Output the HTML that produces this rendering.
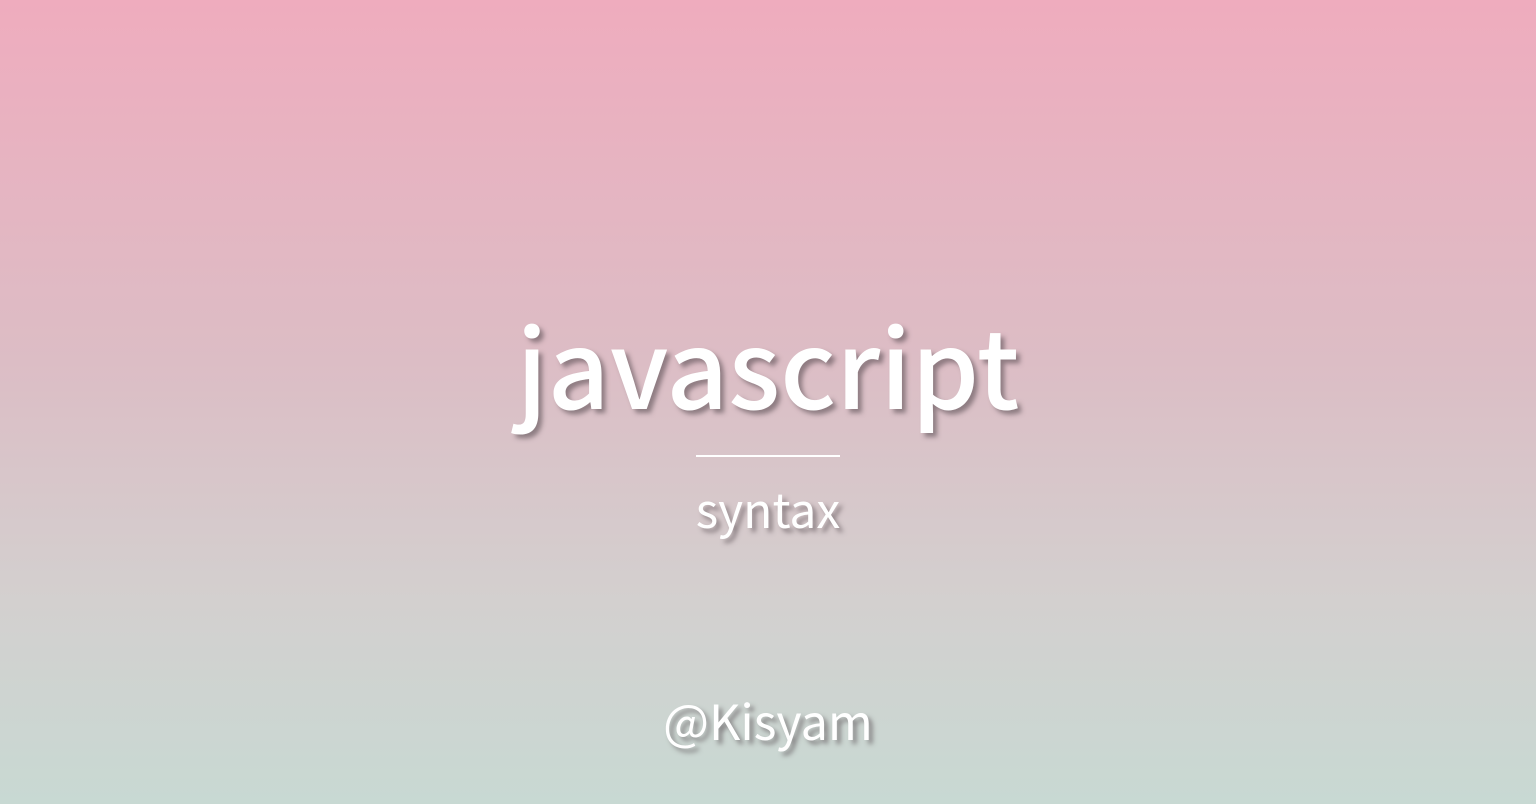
<!DOCTYPE html>
<html><head><style>
html,body{margin:0;padding:0}
body{width:1536px;height:804px;overflow:hidden;position:relative;background:linear-gradient(to bottom,#efacbe 0%,#dcbdc5 45%,#d3d0cf 75%,#c8d9d3 100%);font-family:"Noto Sans CJK JP","Liberation Sans",sans-serif;color:#fff}
.t{position:absolute;left:0;width:1536px;text-align:center;line-height:1;text-shadow:4px 4px 5px rgba(80,70,75,.55);white-space:nowrap}
</style></head><body>
<div class="t" style="top:309px;font-size:108px;font-weight:500">javascript</div>
<div style="position:absolute;left:696px;top:455px;width:144px;height:2px;background:#fff"></div>
<div class="t" style="top:483px;font-size:48px;">syntax</div>
<div class="t" style="top:695px;font-size:48.5px;">@Kisyam</div>
</body></html>
